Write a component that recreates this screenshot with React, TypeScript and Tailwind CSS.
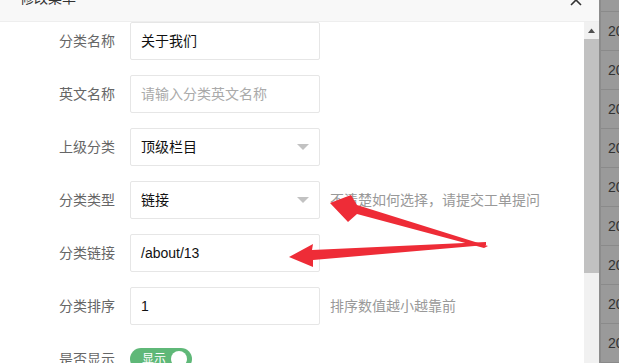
import React from "react";

const font = { fontFamily: '"Liberation Sans", "Noto Sans CJK SC", sans-serif' };

function Caret() {
  return (
    <span className="ml-auto mr-[10px] w-0 h-0 border-x-[6px] border-x-transparent border-t-[6px] border-t-[#c2c2c2]" />
  );
}

function Row({ label, children, tip }: { label: string; children: React.ReactNode; tip?: string }) {
  return (
    <div className="flex items-center h-[38px]">
      <div className="w-[115px] text-right text-[14px] text-[#666] shrink-0">{label}</div>
      <div className="ml-[15px] w-[190px] h-[38px] flex items-center">{children}</div>
      {tip && <div className="ml-[10px] text-[14px] text-[#999] whitespace-nowrap">{tip}</div>}
    </div>
  );
}

function Box({ children, select }: { children: React.ReactNode; select?: boolean }) {
  return (
    <div className="w-full h-full border border-[#e6e6e6] rounded-[2px] bg-white flex items-center pl-[10px] text-[14px]">
      {children}
      {select && <Caret />}
    </div>
  );
}

export default function App() {
  const stripRows = Array.from({ length: 9 });
  return (
    <div className="w-[619px] h-[363px] overflow-hidden flex bg-white relative" style={font}>
      {/* dialog */}
      <div className="w-[599px] h-full flex flex-col">
        <div className="h-[22px] overflow-hidden bg-[#f8f8f8] border-b border-[#eee] shrink-0">
          <div className="-mt-[23px] h-[42px] flex items-center justify-between pl-[20px] pr-[17px] text-[14px] text-[#333]">
            <span>修改菜单</span>
            <svg width="12" height="12" viewBox="0 0 12 12" className="mt-[4px]">
              <path d="M1 1 L11 11 M11 1 L1 11" stroke="#333" strokeWidth="1.6" />
            </svg>
          </div>
        </div>
        <div className="flex flex-1 min-h-0">
          <div className="flex-1 flex flex-col gap-[15px] overflow-hidden">
            <Row label="分类名称">
              <Box><span className="text-[#111]">关于我们</span></Box>
            </Row>
            <Row label="英文名称">
              <Box><span className="text-[#aaa]">请输入分类英文名称</span></Box>
            </Row>
            <Row label="上级分类">
              <Box select><span className="text-[#111]">顶级栏目</span></Box>
            </Row>
            <Row label="分类类型" tip="不清楚如何选择，请提交工单提问">
              <Box select><span className="text-[#111]">链接</span></Box>
            </Row>
            <Row label="分类链接">
              <Box><span className="text-[#111]">/about/13</span></Box>
            </Row>
            <Row label="分类排序" tip="排序数值越小越靠前">
              <Box><span className="text-[#111]">1</span></Box>
            </Row>
            <Row label="是否显示">
              <div className="w-[62px] h-[22px] rounded-full bg-[#5fb878] flex items-center justify-between pl-[12px] pr-[5px] text-[12px] text-white">
                <span>显示</span>
                <span className="w-[16px] h-[16px] rounded-full bg-white" />
              </div>
            </Row>
          </div>
          {/* scrollbar */}
          <div className="w-[15px] bg-[#f1f1f1] flex flex-col shrink-0">
            <div className="h-[17px] flex items-center justify-center">
              <svg width="7" height="5" viewBox="0 0 7 5">
                <path d="M0 5 L3.5 0.5 L7 5 Z" fill="#505050" />
              </svg>
            </div>
            <div className="h-[234px] bg-[#c1c1c1]" />
          </div>
        </div>
      </div>
      {/* background table behind the overlay */}
      <div className="w-[20px] h-full bg-[#9a9a9a] border-l-2 border-[#8c8c8c] flex flex-col">
        <div className="h-[12px] border-b border-[#8a8a8a] shrink-0" />
        {stripRows.map((_, i) => (
          <div key={i} className="h-[39px] shrink-0 border-b border-[#8a8a8a] flex items-center pl-[7px] text-[14px] text-[#333]">
            20
          </div>
        ))}
      </div>
      {/* red annotation arrows */}
      <svg className="absolute left-0 top-0 pointer-events-none" width="619" height="363" viewBox="0 0 619 363">
        <polygon
          points="330,203 351,195 357,205 488,246 484,248 357,214 348,222"
          fill="#ee2c37"
        />
        <polygon
          points="289,257 313,244 312,250 486,242 486,245 313,260 313,267"
          fill="#ee2c37"
        />
      </svg>
    </div>
  );
}
